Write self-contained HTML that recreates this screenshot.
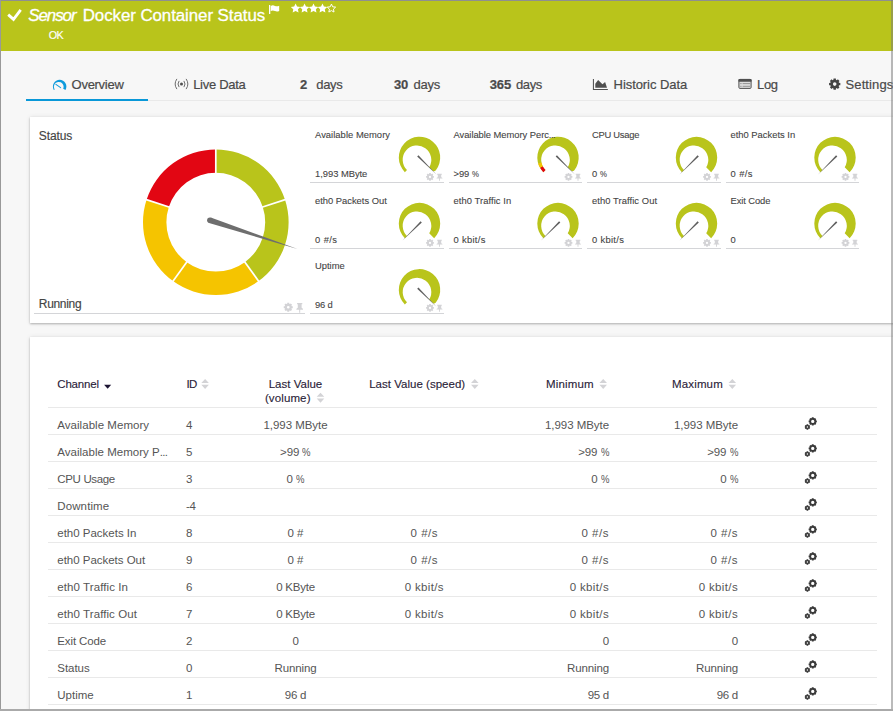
<!DOCTYPE html>
<html lang="en"><head><meta charset="utf-8"><title>Sensor Docker Container Status</title>
<style>
html,body{margin:0;padding:0}
body{width:893px;height:711px;overflow:hidden;position:relative;background:#f7f7f7;font-family:"Liberation Sans", sans-serif;}
.t{position:absolute;white-space:nowrap;margin:0;padding:0}
.abs{position:absolute}
.el{letter-spacing:-.055em}
.pc{display:inline-block;width:.74em;transform:scaleX(.83);transform-origin:0 50%;letter-spacing:0}
.card{position:absolute;background:#fff;box-shadow:0 1px 2px rgba(0,0,0,.26),0 0 5px rgba(0,0,0,.09)}
.hl{position:absolute;height:1px;background:#d4d5d8}
.rl{position:absolute;height:1px;background:#e9e9e9;left:48px;width:829px}
</style></head><body>
<div class="abs" style="left:0;top:0;width:893px;height:51px;background:#b9c41b"></div>
<div class="abs" style="left:26px;top:100px;width:870px;height:1px;background:#e9e9e9"></div>
<div class="abs" style="left:26px;top:99px;width:122px;height:2px;background:#0998d8"></div>
<div class="card" style="left:30px;top:117px;width:880px;height:206px"></div>
<div class="card" style="left:30px;top:337px;width:880px;height:400px"></div>
<div class="hl" style="left:34px;top:313px;width:271px"></div>
<div class="hl" style="left:310.0px;top:182px;width:133.5px"></div><div class="hl" style="left:448.5px;top:182px;width:133.5px"></div><div class="hl" style="left:587.0px;top:182px;width:133.5px"></div><div class="hl" style="left:725.5px;top:182px;width:133.5px"></div><div class="hl" style="left:310.0px;top:248px;width:133.5px"></div><div class="hl" style="left:448.5px;top:248px;width:133.5px"></div><div class="hl" style="left:587.0px;top:248px;width:133.5px"></div><div class="hl" style="left:725.5px;top:248px;width:133.5px"></div><div class="hl" style="left:310.0px;top:313px;width:133.5px"></div>
<div class="rl" style="top:407px"></div><div class="rl" style="top:434px"></div><div class="rl" style="top:461px"></div><div class="rl" style="top:488px"></div><div class="rl" style="top:515px"></div><div class="rl" style="top:542px"></div><div class="rl" style="top:569px"></div><div class="rl" style="top:596px"></div><div class="rl" style="top:623px"></div><div class="rl" style="top:650px"></div><div class="rl" style="top:677px"></div><div class="rl" style="top:704px"></div>
<svg class="abs" style="left:0;top:0" width="893" height="711" viewBox="0 0 893 711">
<path fill="none" stroke="#fff" stroke-width="2.8" d="M8.2 14.6L13.5 19.4L20.7 9.9"/>
<path fill="#fff" d="M269 5h1.3v9h-1.3zM270.8 5.9c1.6-.9 2.8-.6 4.2 0s2.6 .6 4.2-.2v5.2c-1.6 .8-2.8 .8-4.2 .2s-2.6-.9-4.2 0z"/>
<polygon fill="#fff" points="295.60,3.50 297.04,6.52 300.36,6.95 297.93,9.26 298.54,12.55 295.60,10.95 292.66,12.55 293.27,9.26 290.84,6.95 294.16,6.52"/>
<polygon fill="#fff" points="304.56,3.50 306.00,6.52 309.32,6.95 306.89,9.26 307.50,12.55 304.56,10.95 301.62,12.55 302.23,9.26 299.80,6.95 303.12,6.52"/>
<polygon fill="#fff" points="313.52,3.50 314.96,6.52 318.28,6.95 315.85,9.26 316.46,12.55 313.52,10.95 310.58,12.55 311.19,9.26 308.76,6.95 312.08,6.52"/>
<polygon fill="#fff" points="322.48,3.50 323.92,6.52 327.24,6.95 324.81,9.26 325.42,12.55 322.48,10.95 319.54,12.55 320.15,9.26 317.72,6.95 321.04,6.52"/>
<polygon fill="none" stroke="#fff" stroke-width="1" points="331.44,4.10 332.67,6.80 335.62,7.14 333.44,9.15 334.03,12.06 331.44,10.60 328.85,12.06 329.44,9.15 327.26,7.14 330.21,6.80"/>
<path fill="#0f9bdc" d="M53.80 89.97A6.75 6.75 0 1 1 65.50 89.97L63.21 88.66A4.85 4.85 0 1 0 54.72 89.45Z"/>
<path stroke="#0f9bdc" stroke-width="1.05" stroke-linecap="round" d="M55.9 84.4L60.6 87.6"/>
<circle cx="181.5" cy="84" r="1.5" fill="#505050"/>
<g fill="none" stroke="#5c5c5c" stroke-width=".9"><path d="M179.1 80.9Q176.9 84 179.1 87.1"/><path d="M183.9 80.9Q186.1 84 183.9 87.1"/><path d="M176.9 78.9Q173.4 84 176.9 89.1"/><path d="M186.1 78.9Q189.6 84 186.1 89.1"/></g>
<path fill="#505050" d="M592.9 79h1.05v10h13.9v1h-14.95z"/>
<path fill="#505050" d="M595.3 87.8v-4l2.8 -3.8 4.4 4.3 2.6 -2.3 1.9 5.8z"/>
<rect x="738.9" y="79.4" width="12.2" height="9" rx="1" fill="#ddd" stroke="#505050" stroke-width="1"/>
<rect x="738.4" y="78.9" width="13.2" height="2.9" rx="0.8" fill="#505050"/>
<path stroke="#8a8a8a" stroke-width="0.9" d="M740.2 83.6h1.4M742.6 83.6h7.4M740.2 86.3h1.4M742.6 86.3h7.4"/>
<path fill-rule="evenodd" fill="#444" d="M833.53 78.47L835.87 78.47L835.96 79.78L836.87 80.16L837.86 79.29L839.51 80.94L838.64 81.93L839.02 82.84L840.33 82.93L840.33 85.27L839.02 85.36L838.64 86.27L839.51 87.26L837.86 88.91L836.87 88.04L835.96 88.42L835.87 89.73L833.53 89.73L833.44 88.42L832.53 88.04L831.54 88.91L829.89 87.26L830.76 86.27L830.38 85.36L829.07 85.27L829.07 82.93L830.38 82.84L830.76 81.93L829.89 80.94L831.54 79.29L832.53 80.16L833.44 79.78ZM832.90 84.10a1.8 1.8 0 1 0 3.6 0a1.8 1.8 0 1 0 -3.6 0Z"/>
<path fill="#b9c41b" d="M215.80 149.40A72.8 72.8 0 0 1 285.04 199.70L262.78 206.93A49.4 49.4 0 0 0 215.80 172.80Z"/>
<path fill="#b9c41b" d="M285.04 199.70A72.8 72.8 0 0 1 258.59 281.10L244.84 262.17A49.4 49.4 0 0 0 262.78 206.93Z"/>
<path fill="#f5c400" d="M258.59 281.10A72.8 72.8 0 0 1 173.01 281.10L186.76 262.17A49.4 49.4 0 0 0 244.84 262.17Z"/>
<path fill="#f5c400" d="M173.01 281.10A72.8 72.8 0 0 1 146.56 199.70L168.82 206.93A49.4 49.4 0 0 0 186.76 262.17Z"/>
<path fill="#e20613" d="M146.56 199.70A72.8 72.8 0 0 1 215.80 149.40L215.80 172.80A49.4 49.4 0 0 0 168.82 206.93Z"/>
<path stroke="#fff" stroke-width="1.7" d="M215.80 148.40L215.80 173.80"/>
<path stroke="#fff" stroke-width="1.7" d="M285.99 199.39L261.83 207.24"/>
<path stroke="#fff" stroke-width="1.7" d="M259.18 281.91L244.25 261.36"/>
<path stroke="#fff" stroke-width="1.7" d="M172.42 281.91L187.35 261.36"/>
<path stroke="#fff" stroke-width="1.7" d="M145.61 199.39L169.77 207.24"/>
<path fill="#6e6e6e" d="M209.04 222.92L297.50 249.06L210.78 217.60Z"/>
<circle cx="209.91" cy="220.26" r="2.80" fill="#6e6e6e"/>
<g fill="#d3d3d6"><path fill-rule="evenodd" d="M287.28 302.75L289.22 302.75L289.25 303.79L289.98 304.10L290.75 303.39L292.11 304.75L291.40 305.52L291.71 306.25L292.75 306.28L292.75 308.22L291.71 308.25L291.40 308.98L292.11 309.75L290.75 311.11L289.98 310.40L289.25 310.71L289.22 311.75L287.28 311.75L287.25 310.71L286.52 310.40L285.75 311.11L284.39 309.75L285.10 308.98L284.79 308.25L283.75 308.22L283.75 306.28L284.79 306.25L285.10 305.52L284.39 304.75L285.75 303.39L286.52 304.10L287.25 303.79ZM286.90 307.25a1.35 1.35 0 1 0 2.7 0a1.35 1.35 0 1 0 -2.7 0Z"/><path d="M297.10 303.00h5.20v1.30h-0.70v3.35q1.50 0.60 1.50 2.05h-2.90v3.05h-1.00v-3.05h-2.90q0 -1.45 1.50 -2.05v-3.35h-0.70z"/></g>
<path fill="#b9c41b" d="M404.86 172.14A20.7 20.7 0 1 1 435.86 170.19Q434.14 172.14 432.30 170.30L429.22 167.22A14.3 14.3 0 1 0 406.99 170.01Z"/>
<path fill="#5e5e5e" d="M417.17 156.44L436.47 174.47L418.44 155.17Z"/>
<g fill="#d3d3d6"><path fill-rule="evenodd" d="M429.17 173.04L430.83 173.04L430.86 173.92L431.49 174.18L432.14 173.58L433.32 174.76L432.72 175.41L432.98 176.04L433.86 176.07L433.86 177.73L432.98 177.76L432.72 178.39L433.32 179.04L432.14 180.22L431.49 179.62L430.86 179.88L430.83 180.76L429.17 180.76L429.14 179.88L428.51 179.62L427.86 180.22L426.68 179.04L427.28 178.39L427.02 177.76L426.14 177.73L426.14 176.07L427.02 176.04L427.28 175.41L426.68 174.76L427.86 173.58L428.51 174.18L429.14 173.92ZM428.85 176.90a1.15 1.15 0 1 0 2.3 0a1.15 1.15 0 1 0 -2.3 0Z"/><path d="M437.16 173.85h4.68v0.92h-0.63v2.38q1.35 0.43 1.35 1.46h-2.61v2.17h-0.90v-2.17h-2.61q0 -1.03 1.35 -1.46v-2.38h-0.63z"/></g>
<path fill="#b9c41b" d="M543.36 172.14A20.7 20.7 0 1 1 574.36 170.19Q572.64 172.14 570.80 170.30L567.72 167.22A14.3 14.3 0 1 0 545.49 170.01Z"/>
<path fill="#e20613" d="M543.36 172.14A20.7 20.7 0 0 1 540.07 167.85L542.76 166.30A14.3 14.3 0 0 0 545.49 170.01Z"/>
<path fill="#f5c400" d="M540.07 167.85A20.7 20.7 0 0 1 538.15 163.38L541.44 162.41A14.3 14.3 0 0 0 542.76 166.30Z"/>
<path fill="#5e5e5e" d="M555.67 156.44L574.97 174.47L556.94 155.17Z"/>
<g fill="#d3d3d6"><path fill-rule="evenodd" d="M567.67 173.04L569.33 173.04L569.36 173.92L569.99 174.18L570.64 173.58L571.82 174.76L571.22 175.41L571.48 176.04L572.36 176.07L572.36 177.73L571.48 177.76L571.22 178.39L571.82 179.04L570.64 180.22L569.99 179.62L569.36 179.88L569.33 180.76L567.67 180.76L567.64 179.88L567.01 179.62L566.36 180.22L565.18 179.04L565.78 178.39L565.52 177.76L564.64 177.73L564.64 176.07L565.52 176.04L565.78 175.41L565.18 174.76L566.36 173.58L567.01 174.18L567.64 173.92ZM567.35 176.90a1.15 1.15 0 1 0 2.3 0a1.15 1.15 0 1 0 -2.3 0Z"/><path d="M575.66 173.85h4.68v0.92h-0.63v2.38q1.35 0.43 1.35 1.46h-2.61v2.17h-0.90v-2.17h-2.61q0 -1.03 1.35 -1.46v-2.38h-0.63z"/></g>
<path fill="#b9c41b" d="M681.86 172.14A20.7 20.7 0 1 1 711.14 172.14L706.22 167.22A14.3 14.3 0 1 0 683.99 170.01Z"/>
<path fill="#5e5e5e" d="M697.56 155.17L679.53 174.47L698.83 156.44Z"/>
<g fill="#d3d3d6"><path fill-rule="evenodd" d="M706.17 173.04L707.83 173.04L707.86 173.92L708.49 174.18L709.14 173.58L710.32 174.76L709.72 175.41L709.98 176.04L710.86 176.07L710.86 177.73L709.98 177.76L709.72 178.39L710.32 179.04L709.14 180.22L708.49 179.62L707.86 179.88L707.83 180.76L706.17 180.76L706.14 179.88L705.51 179.62L704.86 180.22L703.68 179.04L704.28 178.39L704.02 177.76L703.14 177.73L703.14 176.07L704.02 176.04L704.28 175.41L703.68 174.76L704.86 173.58L705.51 174.18L706.14 173.92ZM705.85 176.90a1.15 1.15 0 1 0 2.3 0a1.15 1.15 0 1 0 -2.3 0Z"/><path d="M714.16 173.85h4.68v0.92h-0.63v2.38q1.35 0.43 1.35 1.46h-2.61v2.17h-0.90v-2.17h-2.61q0 -1.03 1.35 -1.46v-2.38h-0.63z"/></g>
<path fill="#b9c41b" d="M820.36 172.14A20.7 20.7 0 1 1 849.64 172.14L844.72 167.22A14.3 14.3 0 1 0 822.49 170.01Z"/>
<path fill="#5e5e5e" d="M836.06 155.17L818.03 174.47L837.33 156.44Z"/>
<g fill="#d3d3d6"><path fill-rule="evenodd" d="M844.67 173.04L846.33 173.04L846.36 173.92L846.99 174.18L847.64 173.58L848.82 174.76L848.22 175.41L848.48 176.04L849.36 176.07L849.36 177.73L848.48 177.76L848.22 178.39L848.82 179.04L847.64 180.22L846.99 179.62L846.36 179.88L846.33 180.76L844.67 180.76L844.64 179.88L844.01 179.62L843.36 180.22L842.18 179.04L842.78 178.39L842.52 177.76L841.64 177.73L841.64 176.07L842.52 176.04L842.78 175.41L842.18 174.76L843.36 173.58L844.01 174.18L844.64 173.92ZM844.35 176.90a1.15 1.15 0 1 0 2.3 0a1.15 1.15 0 1 0 -2.3 0Z"/><path d="M852.66 173.85h4.68v0.92h-0.63v2.38q1.35 0.43 1.35 1.46h-2.61v2.17h-0.90v-2.17h-2.61q0 -1.03 1.35 -1.46v-2.38h-0.63z"/></g>
<path fill="#b9c41b" d="M404.86 238.14A20.7 20.7 0 1 1 434.14 238.14L429.22 233.22A14.3 14.3 0 1 0 406.99 236.01Z"/>
<path fill="#5e5e5e" d="M420.56 221.17L402.53 240.47L421.83 222.44Z"/>
<g fill="#d3d3d6"><path fill-rule="evenodd" d="M429.17 239.04L430.83 239.04L430.86 239.92L431.49 240.18L432.14 239.58L433.32 240.76L432.72 241.41L432.98 242.04L433.86 242.07L433.86 243.73L432.98 243.76L432.72 244.39L433.32 245.04L432.14 246.22L431.49 245.62L430.86 245.88L430.83 246.76L429.17 246.76L429.14 245.88L428.51 245.62L427.86 246.22L426.68 245.04L427.28 244.39L427.02 243.76L426.14 243.73L426.14 242.07L427.02 242.04L427.28 241.41L426.68 240.76L427.86 239.58L428.51 240.18L429.14 239.92ZM428.85 242.90a1.15 1.15 0 1 0 2.3 0a1.15 1.15 0 1 0 -2.3 0Z"/><path d="M437.16 239.85h4.68v0.92h-0.63v2.38q1.35 0.43 1.35 1.46h-2.61v2.17h-0.90v-2.17h-2.61q0 -1.03 1.35 -1.46v-2.38h-0.63z"/></g>
<path fill="#b9c41b" d="M543.36 238.14A20.7 20.7 0 1 1 572.64 238.14L567.72 233.22A14.3 14.3 0 1 0 545.49 236.01Z"/>
<path fill="#5e5e5e" d="M559.06 221.17L541.03 240.47L560.33 222.44Z"/>
<g fill="#d3d3d6"><path fill-rule="evenodd" d="M567.67 239.04L569.33 239.04L569.36 239.92L569.99 240.18L570.64 239.58L571.82 240.76L571.22 241.41L571.48 242.04L572.36 242.07L572.36 243.73L571.48 243.76L571.22 244.39L571.82 245.04L570.64 246.22L569.99 245.62L569.36 245.88L569.33 246.76L567.67 246.76L567.64 245.88L567.01 245.62L566.36 246.22L565.18 245.04L565.78 244.39L565.52 243.76L564.64 243.73L564.64 242.07L565.52 242.04L565.78 241.41L565.18 240.76L566.36 239.58L567.01 240.18L567.64 239.92ZM567.35 242.90a1.15 1.15 0 1 0 2.3 0a1.15 1.15 0 1 0 -2.3 0Z"/><path d="M575.66 239.85h4.68v0.92h-0.63v2.38q1.35 0.43 1.35 1.46h-2.61v2.17h-0.90v-2.17h-2.61q0 -1.03 1.35 -1.46v-2.38h-0.63z"/></g>
<path fill="#b9c41b" d="M681.86 238.14A20.7 20.7 0 1 1 711.14 238.14L706.22 233.22A14.3 14.3 0 1 0 683.99 236.01Z"/>
<path fill="#5e5e5e" d="M697.56 221.17L679.53 240.47L698.83 222.44Z"/>
<g fill="#d3d3d6"><path fill-rule="evenodd" d="M706.17 239.04L707.83 239.04L707.86 239.92L708.49 240.18L709.14 239.58L710.32 240.76L709.72 241.41L709.98 242.04L710.86 242.07L710.86 243.73L709.98 243.76L709.72 244.39L710.32 245.04L709.14 246.22L708.49 245.62L707.86 245.88L707.83 246.76L706.17 246.76L706.14 245.88L705.51 245.62L704.86 246.22L703.68 245.04L704.28 244.39L704.02 243.76L703.14 243.73L703.14 242.07L704.02 242.04L704.28 241.41L703.68 240.76L704.86 239.58L705.51 240.18L706.14 239.92ZM705.85 242.90a1.15 1.15 0 1 0 2.3 0a1.15 1.15 0 1 0 -2.3 0Z"/><path d="M714.16 239.85h4.68v0.92h-0.63v2.38q1.35 0.43 1.35 1.46h-2.61v2.17h-0.90v-2.17h-2.61q0 -1.03 1.35 -1.46v-2.38h-0.63z"/></g>
<path fill="#b9c41b" d="M820.36 238.14A20.7 20.7 0 1 1 849.64 238.14L844.72 233.22A14.3 14.3 0 1 0 822.49 236.01Z"/>
<path fill="#5e5e5e" d="M836.06 221.17L818.03 240.47L837.33 222.44Z"/>
<g fill="#d3d3d6"><path fill-rule="evenodd" d="M844.67 239.04L846.33 239.04L846.36 239.92L846.99 240.18L847.64 239.58L848.82 240.76L848.22 241.41L848.48 242.04L849.36 242.07L849.36 243.73L848.48 243.76L848.22 244.39L848.82 245.04L847.64 246.22L846.99 245.62L846.36 245.88L846.33 246.76L844.67 246.76L844.64 245.88L844.01 245.62L843.36 246.22L842.18 245.04L842.78 244.39L842.52 243.76L841.64 243.73L841.64 242.07L842.52 242.04L842.78 241.41L842.18 240.76L843.36 239.58L844.01 240.18L844.64 239.92ZM844.35 242.90a1.15 1.15 0 1 0 2.3 0a1.15 1.15 0 1 0 -2.3 0Z"/><path d="M852.66 239.85h4.68v0.92h-0.63v2.38q1.35 0.43 1.35 1.46h-2.61v2.17h-0.90v-2.17h-2.61q0 -1.03 1.35 -1.46v-2.38h-0.63z"/></g>
<path fill="#b9c41b" d="M404.86 304.44A20.7 20.7 0 1 1 435.86 302.49Q434.14 304.44 432.30 302.60L429.22 299.52A14.3 14.3 0 1 0 406.99 302.31Z"/>
<path fill="#5e5e5e" d="M417.17 288.74L436.47 306.77L418.44 287.47Z"/>
<g fill="#d3d3d6"><path fill-rule="evenodd" d="M429.17 304.04L430.83 304.04L430.86 304.92L431.49 305.18L432.14 304.58L433.32 305.76L432.72 306.41L432.98 307.04L433.86 307.07L433.86 308.73L432.98 308.76L432.72 309.39L433.32 310.04L432.14 311.22L431.49 310.62L430.86 310.88L430.83 311.76L429.17 311.76L429.14 310.88L428.51 310.62L427.86 311.22L426.68 310.04L427.28 309.39L427.02 308.76L426.14 308.73L426.14 307.07L427.02 307.04L427.28 306.41L426.68 305.76L427.86 304.58L428.51 305.18L429.14 304.92ZM428.85 307.90a1.15 1.15 0 1 0 2.3 0a1.15 1.15 0 1 0 -2.3 0Z"/><path d="M437.16 304.85h4.68v0.92h-0.63v2.38q1.35 0.43 1.35 1.46h-2.61v2.17h-0.90v-2.17h-2.61q0 -1.03 1.35 -1.46v-2.38h-0.63z"/></g>
<path fill="#1c1433" d="M104.1 384.8h7.1l-3.55 3.9z"/>
<path fill="#d3d3d6" d="M201.30 383h7.6l-3.8 -4.1zM201.30 384.8h7.6l-3.8 4.1z"/>
<path fill="#d3d3d6" d="M316.70 396.80h7.6l-3.8 -4.1zM316.70 398.60h7.6l-3.8 4.1z"/>
<path fill="#d3d3d6" d="M471.00 383h7.6l-3.8 -4.1zM471.00 384.8h7.6l-3.8 4.1z"/>
<path fill="#d3d3d6" d="M599.40 383h7.6l-3.8 -4.1zM599.40 384.8h7.6l-3.8 4.1z"/>
<path fill="#d3d3d6" d="M728.50 383h7.6l-3.8 -4.1zM728.50 384.8h7.6l-3.8 4.1z"/>
<g fill="#3a3a3a"><path fill-rule="evenodd" d="M811.87 417.34L813.63 417.34L813.78 418.10L814.39 418.36L815.03 417.92L816.28 419.17L815.84 419.81L816.10 420.42L816.86 420.57L816.86 422.33L816.10 422.48L815.84 423.09L816.28 423.73L815.03 424.98L814.39 424.54L813.78 424.80L813.63 425.56L811.87 425.56L811.72 424.80L811.11 424.54L810.47 424.98L809.22 423.73L809.66 423.09L809.40 422.48L808.64 422.33L808.64 420.57L809.40 420.42L809.66 419.81L809.22 419.17L810.47 417.92L811.11 418.36L811.72 418.10ZM811.10 421.45a1.65 1.65 0 1 0 3.3 0a1.65 1.65 0 1 0 -3.3 0Z"/>
<path fill-rule="evenodd" d="M806.60 424.26L808.20 424.26L808.29 424.88L808.79 425.17L809.37 424.94L810.17 426.32L809.68 426.71L809.68 427.29L810.17 427.68L809.37 429.06L808.79 428.83L808.29 429.12L808.20 429.74L806.60 429.74L806.51 429.12L806.01 428.83L805.43 429.06L804.63 427.68L805.12 427.29L805.12 426.71L804.63 426.32L805.43 424.94L806.01 425.17L806.51 424.88ZM806.65 427.00a0.75 0.75 0 1 0 1.5 0a0.75 0.75 0 1 0 -1.5 0Z"/>
<path fill-rule="evenodd" d="M811.87 444.34L813.63 444.34L813.78 445.10L814.39 445.36L815.03 444.92L816.28 446.17L815.84 446.81L816.10 447.42L816.86 447.57L816.86 449.33L816.10 449.48L815.84 450.09L816.28 450.73L815.03 451.98L814.39 451.54L813.78 451.80L813.63 452.56L811.87 452.56L811.72 451.80L811.11 451.54L810.47 451.98L809.22 450.73L809.66 450.09L809.40 449.48L808.64 449.33L808.64 447.57L809.40 447.42L809.66 446.81L809.22 446.17L810.47 444.92L811.11 445.36L811.72 445.10ZM811.10 448.45a1.65 1.65 0 1 0 3.3 0a1.65 1.65 0 1 0 -3.3 0Z"/>
<path fill-rule="evenodd" d="M806.60 451.26L808.20 451.26L808.29 451.88L808.79 452.17L809.37 451.94L810.17 453.32L809.68 453.71L809.68 454.29L810.17 454.68L809.37 456.06L808.79 455.83L808.29 456.12L808.20 456.74L806.60 456.74L806.51 456.12L806.01 455.83L805.43 456.06L804.63 454.68L805.12 454.29L805.12 453.71L804.63 453.32L805.43 451.94L806.01 452.17L806.51 451.88ZM806.65 454.00a0.75 0.75 0 1 0 1.5 0a0.75 0.75 0 1 0 -1.5 0Z"/>
<path fill-rule="evenodd" d="M811.87 471.34L813.63 471.34L813.78 472.10L814.39 472.36L815.03 471.92L816.28 473.17L815.84 473.81L816.10 474.42L816.86 474.57L816.86 476.33L816.10 476.48L815.84 477.09L816.28 477.73L815.03 478.98L814.39 478.54L813.78 478.80L813.63 479.56L811.87 479.56L811.72 478.80L811.11 478.54L810.47 478.98L809.22 477.73L809.66 477.09L809.40 476.48L808.64 476.33L808.64 474.57L809.40 474.42L809.66 473.81L809.22 473.17L810.47 471.92L811.11 472.36L811.72 472.10ZM811.10 475.45a1.65 1.65 0 1 0 3.3 0a1.65 1.65 0 1 0 -3.3 0Z"/>
<path fill-rule="evenodd" d="M806.60 478.26L808.20 478.26L808.29 478.88L808.79 479.17L809.37 478.94L810.17 480.32L809.68 480.71L809.68 481.29L810.17 481.68L809.37 483.06L808.79 482.83L808.29 483.12L808.20 483.74L806.60 483.74L806.51 483.12L806.01 482.83L805.43 483.06L804.63 481.68L805.12 481.29L805.12 480.71L804.63 480.32L805.43 478.94L806.01 479.17L806.51 478.88ZM806.65 481.00a0.75 0.75 0 1 0 1.5 0a0.75 0.75 0 1 0 -1.5 0Z"/>
<path fill-rule="evenodd" d="M811.87 498.34L813.63 498.34L813.78 499.10L814.39 499.36L815.03 498.92L816.28 500.17L815.84 500.81L816.10 501.42L816.86 501.57L816.86 503.33L816.10 503.48L815.84 504.09L816.28 504.73L815.03 505.98L814.39 505.54L813.78 505.80L813.63 506.56L811.87 506.56L811.72 505.80L811.11 505.54L810.47 505.98L809.22 504.73L809.66 504.09L809.40 503.48L808.64 503.33L808.64 501.57L809.40 501.42L809.66 500.81L809.22 500.17L810.47 498.92L811.11 499.36L811.72 499.10ZM811.10 502.45a1.65 1.65 0 1 0 3.3 0a1.65 1.65 0 1 0 -3.3 0Z"/>
<path fill-rule="evenodd" d="M806.60 505.26L808.20 505.26L808.29 505.88L808.79 506.17L809.37 505.94L810.17 507.32L809.68 507.71L809.68 508.29L810.17 508.68L809.37 510.06L808.79 509.83L808.29 510.12L808.20 510.74L806.60 510.74L806.51 510.12L806.01 509.83L805.43 510.06L804.63 508.68L805.12 508.29L805.12 507.71L804.63 507.32L805.43 505.94L806.01 506.17L806.51 505.88ZM806.65 508.00a0.75 0.75 0 1 0 1.5 0a0.75 0.75 0 1 0 -1.5 0Z"/>
<path fill-rule="evenodd" d="M811.87 525.34L813.63 525.34L813.78 526.10L814.39 526.36L815.03 525.92L816.28 527.17L815.84 527.81L816.10 528.42L816.86 528.57L816.86 530.33L816.10 530.48L815.84 531.09L816.28 531.73L815.03 532.98L814.39 532.54L813.78 532.80L813.63 533.56L811.87 533.56L811.72 532.80L811.11 532.54L810.47 532.98L809.22 531.73L809.66 531.09L809.40 530.48L808.64 530.33L808.64 528.57L809.40 528.42L809.66 527.81L809.22 527.17L810.47 525.92L811.11 526.36L811.72 526.10ZM811.10 529.45a1.65 1.65 0 1 0 3.3 0a1.65 1.65 0 1 0 -3.3 0Z"/>
<path fill-rule="evenodd" d="M806.60 532.26L808.20 532.26L808.29 532.88L808.79 533.17L809.37 532.94L810.17 534.32L809.68 534.71L809.68 535.29L810.17 535.68L809.37 537.06L808.79 536.83L808.29 537.12L808.20 537.74L806.60 537.74L806.51 537.12L806.01 536.83L805.43 537.06L804.63 535.68L805.12 535.29L805.12 534.71L804.63 534.32L805.43 532.94L806.01 533.17L806.51 532.88ZM806.65 535.00a0.75 0.75 0 1 0 1.5 0a0.75 0.75 0 1 0 -1.5 0Z"/>
<path fill-rule="evenodd" d="M811.87 552.34L813.63 552.34L813.78 553.10L814.39 553.36L815.03 552.92L816.28 554.17L815.84 554.81L816.10 555.42L816.86 555.57L816.86 557.33L816.10 557.48L815.84 558.09L816.28 558.73L815.03 559.98L814.39 559.54L813.78 559.80L813.63 560.56L811.87 560.56L811.72 559.80L811.11 559.54L810.47 559.98L809.22 558.73L809.66 558.09L809.40 557.48L808.64 557.33L808.64 555.57L809.40 555.42L809.66 554.81L809.22 554.17L810.47 552.92L811.11 553.36L811.72 553.10ZM811.10 556.45a1.65 1.65 0 1 0 3.3 0a1.65 1.65 0 1 0 -3.3 0Z"/>
<path fill-rule="evenodd" d="M806.60 559.26L808.20 559.26L808.29 559.88L808.79 560.17L809.37 559.94L810.17 561.32L809.68 561.71L809.68 562.29L810.17 562.68L809.37 564.06L808.79 563.83L808.29 564.12L808.20 564.74L806.60 564.74L806.51 564.12L806.01 563.83L805.43 564.06L804.63 562.68L805.12 562.29L805.12 561.71L804.63 561.32L805.43 559.94L806.01 560.17L806.51 559.88ZM806.65 562.00a0.75 0.75 0 1 0 1.5 0a0.75 0.75 0 1 0 -1.5 0Z"/>
<path fill-rule="evenodd" d="M811.87 579.34L813.63 579.34L813.78 580.10L814.39 580.36L815.03 579.92L816.28 581.17L815.84 581.81L816.10 582.42L816.86 582.57L816.86 584.33L816.10 584.48L815.84 585.09L816.28 585.73L815.03 586.98L814.39 586.54L813.78 586.80L813.63 587.56L811.87 587.56L811.72 586.80L811.11 586.54L810.47 586.98L809.22 585.73L809.66 585.09L809.40 584.48L808.64 584.33L808.64 582.57L809.40 582.42L809.66 581.81L809.22 581.17L810.47 579.92L811.11 580.36L811.72 580.10ZM811.10 583.45a1.65 1.65 0 1 0 3.3 0a1.65 1.65 0 1 0 -3.3 0Z"/>
<path fill-rule="evenodd" d="M806.60 586.26L808.20 586.26L808.29 586.88L808.79 587.17L809.37 586.94L810.17 588.32L809.68 588.71L809.68 589.29L810.17 589.68L809.37 591.06L808.79 590.83L808.29 591.12L808.20 591.74L806.60 591.74L806.51 591.12L806.01 590.83L805.43 591.06L804.63 589.68L805.12 589.29L805.12 588.71L804.63 588.32L805.43 586.94L806.01 587.17L806.51 586.88ZM806.65 589.00a0.75 0.75 0 1 0 1.5 0a0.75 0.75 0 1 0 -1.5 0Z"/>
<path fill-rule="evenodd" d="M811.87 606.34L813.63 606.34L813.78 607.10L814.39 607.36L815.03 606.92L816.28 608.17L815.84 608.81L816.10 609.42L816.86 609.57L816.86 611.33L816.10 611.48L815.84 612.09L816.28 612.73L815.03 613.98L814.39 613.54L813.78 613.80L813.63 614.56L811.87 614.56L811.72 613.80L811.11 613.54L810.47 613.98L809.22 612.73L809.66 612.09L809.40 611.48L808.64 611.33L808.64 609.57L809.40 609.42L809.66 608.81L809.22 608.17L810.47 606.92L811.11 607.36L811.72 607.10ZM811.10 610.45a1.65 1.65 0 1 0 3.3 0a1.65 1.65 0 1 0 -3.3 0Z"/>
<path fill-rule="evenodd" d="M806.60 613.26L808.20 613.26L808.29 613.88L808.79 614.17L809.37 613.94L810.17 615.32L809.68 615.71L809.68 616.29L810.17 616.68L809.37 618.06L808.79 617.83L808.29 618.12L808.20 618.74L806.60 618.74L806.51 618.12L806.01 617.83L805.43 618.06L804.63 616.68L805.12 616.29L805.12 615.71L804.63 615.32L805.43 613.94L806.01 614.17L806.51 613.88ZM806.65 616.00a0.75 0.75 0 1 0 1.5 0a0.75 0.75 0 1 0 -1.5 0Z"/>
<path fill-rule="evenodd" d="M811.87 633.34L813.63 633.34L813.78 634.10L814.39 634.36L815.03 633.92L816.28 635.17L815.84 635.81L816.10 636.42L816.86 636.57L816.86 638.33L816.10 638.48L815.84 639.09L816.28 639.73L815.03 640.98L814.39 640.54L813.78 640.80L813.63 641.56L811.87 641.56L811.72 640.80L811.11 640.54L810.47 640.98L809.22 639.73L809.66 639.09L809.40 638.48L808.64 638.33L808.64 636.57L809.40 636.42L809.66 635.81L809.22 635.17L810.47 633.92L811.11 634.36L811.72 634.10ZM811.10 637.45a1.65 1.65 0 1 0 3.3 0a1.65 1.65 0 1 0 -3.3 0Z"/>
<path fill-rule="evenodd" d="M806.60 640.26L808.20 640.26L808.29 640.88L808.79 641.17L809.37 640.94L810.17 642.32L809.68 642.71L809.68 643.29L810.17 643.68L809.37 645.06L808.79 644.83L808.29 645.12L808.20 645.74L806.60 645.74L806.51 645.12L806.01 644.83L805.43 645.06L804.63 643.68L805.12 643.29L805.12 642.71L804.63 642.32L805.43 640.94L806.01 641.17L806.51 640.88ZM806.65 643.00a0.75 0.75 0 1 0 1.5 0a0.75 0.75 0 1 0 -1.5 0Z"/>
<path fill-rule="evenodd" d="M811.87 660.34L813.63 660.34L813.78 661.10L814.39 661.36L815.03 660.92L816.28 662.17L815.84 662.81L816.10 663.42L816.86 663.57L816.86 665.33L816.10 665.48L815.84 666.09L816.28 666.73L815.03 667.98L814.39 667.54L813.78 667.80L813.63 668.56L811.87 668.56L811.72 667.80L811.11 667.54L810.47 667.98L809.22 666.73L809.66 666.09L809.40 665.48L808.64 665.33L808.64 663.57L809.40 663.42L809.66 662.81L809.22 662.17L810.47 660.92L811.11 661.36L811.72 661.10ZM811.10 664.45a1.65 1.65 0 1 0 3.3 0a1.65 1.65 0 1 0 -3.3 0Z"/>
<path fill-rule="evenodd" d="M806.60 667.26L808.20 667.26L808.29 667.88L808.79 668.17L809.37 667.94L810.17 669.32L809.68 669.71L809.68 670.29L810.17 670.68L809.37 672.06L808.79 671.83L808.29 672.12L808.20 672.74L806.60 672.74L806.51 672.12L806.01 671.83L805.43 672.06L804.63 670.68L805.12 670.29L805.12 669.71L804.63 669.32L805.43 667.94L806.01 668.17L806.51 667.88ZM806.65 670.00a0.75 0.75 0 1 0 1.5 0a0.75 0.75 0 1 0 -1.5 0Z"/>
<path fill-rule="evenodd" d="M811.87 687.34L813.63 687.34L813.78 688.10L814.39 688.36L815.03 687.92L816.28 689.17L815.84 689.81L816.10 690.42L816.86 690.57L816.86 692.33L816.10 692.48L815.84 693.09L816.28 693.73L815.03 694.98L814.39 694.54L813.78 694.80L813.63 695.56L811.87 695.56L811.72 694.80L811.11 694.54L810.47 694.98L809.22 693.73L809.66 693.09L809.40 692.48L808.64 692.33L808.64 690.57L809.40 690.42L809.66 689.81L809.22 689.17L810.47 687.92L811.11 688.36L811.72 688.10ZM811.10 691.45a1.65 1.65 0 1 0 3.3 0a1.65 1.65 0 1 0 -3.3 0Z"/>
<path fill-rule="evenodd" d="M806.60 694.26L808.20 694.26L808.29 694.88L808.79 695.17L809.37 694.94L810.17 696.32L809.68 696.71L809.68 697.29L810.17 697.68L809.37 699.06L808.79 698.83L808.29 699.12L808.20 699.74L806.60 699.74L806.51 699.12L806.01 698.83L805.43 699.06L804.63 697.68L805.12 697.29L805.12 696.71L804.63 696.32L805.43 694.94L806.01 695.17L806.51 694.88ZM806.65 697.00a0.75 0.75 0 1 0 1.5 0a0.75 0.75 0 1 0 -1.5 0Z"/></g>
</svg>
<span class="t" id="t0" style="top:3.74px;font-size:16.9px;line-height:24px;color:#fff;font-style:italic;letter-spacing:-1.022px;-webkit-text-stroke:0.3px;left:28.20px;">Sensor</span>
<span class="t" id="t1" style="top:3.74px;font-size:16.9px;line-height:24px;color:#fff;letter-spacing:-0.070px;-webkit-text-stroke:0.3px;left:82.70px;">Docker Container Status</span>
<span class="t" id="t2" style="top:27.76px;font-size:10.8px;line-height:15px;color:#fff;letter-spacing:-0.655px;-webkit-text-stroke:0.15px;left:48.80px;">OK</span>
<span class="t" id="t3" style="top:75.50px;font-size:13px;line-height:18px;color:#4a4a4a;letter-spacing:-0.286px;-webkit-text-stroke:0.2px;left:71.60px;">Overview</span>
<span class="t" id="t4" style="top:75.50px;font-size:13px;line-height:18px;color:#4a4a4a;letter-spacing:-0.302px;-webkit-text-stroke:0.2px;left:193.20px;">Live Data</span>
<span class="t" id="t5" style="top:75.50px;font-size:13px;line-height:18px;color:#4a4a4a;font-weight:bold;letter-spacing:0.166px;-webkit-text-stroke:0.2px;left:300.00px;">2</span>
<span class="t" id="t6" style="top:75.50px;font-size:13px;line-height:18px;color:#4a4a4a;letter-spacing:-0.267px;-webkit-text-stroke:0.2px;left:316.20px;">days</span>
<span class="t" id="t7" style="top:75.50px;font-size:13px;line-height:18px;color:#4a4a4a;font-weight:bold;letter-spacing:-0.084px;-webkit-text-stroke:0.2px;left:393.90px;">30</span>
<span class="t" id="t8" style="top:75.50px;font-size:13px;line-height:18px;color:#4a4a4a;letter-spacing:-0.267px;-webkit-text-stroke:0.2px;left:413.60px;">days</span>
<span class="t" id="t9" style="top:75.50px;font-size:13px;line-height:18px;color:#4a4a4a;font-weight:bold;letter-spacing:-0.134px;-webkit-text-stroke:0.2px;left:489.70px;">365</span>
<span class="t" id="t10" style="top:75.50px;font-size:13px;line-height:18px;color:#4a4a4a;letter-spacing:-0.367px;-webkit-text-stroke:0.2px;left:516.00px;">days</span>
<span class="t" id="t11" style="top:75.50px;font-size:13px;line-height:18px;color:#4a4a4a;letter-spacing:-0.071px;-webkit-text-stroke:0.2px;left:613.60px;">Historic Data</span>
<span class="t" id="t12" style="top:75.50px;font-size:13px;line-height:18px;color:#4a4a4a;letter-spacing:-0.301px;-webkit-text-stroke:0.2px;left:757.00px;">Log</span>
<span class="t" id="t13" style="top:75.50px;font-size:13px;line-height:18px;color:#4a4a4a;letter-spacing:0.114px;-webkit-text-stroke:0.2px;left:845.50px;">Settings</span>
<span class="t" id="t14" style="top:127.74px;font-size:12px;line-height:17px;color:#444;letter-spacing:-0.122px;-webkit-text-stroke:0.15px;left:38.80px;">Status</span>
<span class="t" id="t15" style="top:295.74px;font-size:12px;line-height:17px;color:#444;letter-spacing:-0.315px;-webkit-text-stroke:0.15px;left:38.80px;">Running</span>
<span class="t" id="t16" style="top:128.14px;font-size:9.4px;line-height:13px;color:#444;letter-spacing:0.043px;-webkit-text-stroke:0.1px;left:315.00px;">Available Memory</span>
<span class="t" id="t17" style="top:166.74px;font-size:9.4px;line-height:13px;color:#444;letter-spacing:-0.030px;-webkit-text-stroke:0.1px;left:315.00px;">1,993 MByte</span>
<span class="t" id="t18" style="top:128.14px;font-size:9.4px;line-height:13px;color:#444;letter-spacing:-0.041px;-webkit-text-stroke:0.1px;left:453.50px;">Available Memory Perc<span class="el">...</span></span>
<span class="t" id="t19" style="top:166.74px;font-size:9.4px;line-height:13px;color:#444;letter-spacing:-0.075px;-webkit-text-stroke:0.1px;left:453.50px;">&gt;99 <span class="pc">%</span></span>
<span class="t" id="t20" style="top:128.14px;font-size:9.4px;line-height:13px;color:#444;letter-spacing:-0.269px;-webkit-text-stroke:0.1px;left:592.00px;">CPU Usage</span>
<span class="t" id="t21" style="top:166.74px;font-size:9.4px;line-height:13px;color:#444;letter-spacing:-0.132px;-webkit-text-stroke:0.1px;left:592.00px;">0 <span class="pc">%</span></span>
<span class="t" id="t22" style="top:128.14px;font-size:9.4px;line-height:13px;color:#444;letter-spacing:0.002px;-webkit-text-stroke:0.1px;left:730.50px;">eth0 Packets In</span>
<span class="t" id="t23" style="top:166.74px;font-size:9.4px;line-height:13px;color:#444;letter-spacing:0.430px;-webkit-text-stroke:0.1px;left:730.50px;">0 #/s</span>
<span class="t" id="t24" style="top:193.94px;font-size:9.4px;line-height:13px;color:#444;letter-spacing:-0.010px;-webkit-text-stroke:0.1px;left:315.00px;">eth0 Packets Out</span>
<span class="t" id="t25" style="top:232.74px;font-size:9.4px;line-height:13px;color:#444;letter-spacing:0.430px;-webkit-text-stroke:0.1px;left:315.00px;">0 #/s</span>
<span class="t" id="t26" style="top:193.94px;font-size:9.4px;line-height:13px;color:#444;letter-spacing:0.077px;-webkit-text-stroke:0.1px;left:453.50px;">eth0 Traffic In</span>
<span class="t" id="t27" style="top:232.74px;font-size:9.4px;line-height:13px;color:#444;letter-spacing:0.303px;-webkit-text-stroke:0.1px;left:453.50px;">0 kbit/s</span>
<span class="t" id="t28" style="top:193.94px;font-size:9.4px;line-height:13px;color:#444;letter-spacing:0.077px;-webkit-text-stroke:0.1px;left:592.00px;">eth0 Traffic Out</span>
<span class="t" id="t29" style="top:232.74px;font-size:9.4px;line-height:13px;color:#444;letter-spacing:0.303px;-webkit-text-stroke:0.1px;left:592.00px;">0 kbit/s</span>
<span class="t" id="t30" style="top:193.94px;font-size:9.4px;line-height:13px;color:#444;letter-spacing:-0.085px;-webkit-text-stroke:0.1px;left:730.50px;">Exit Code</span>
<span class="t" id="t31" style="top:232.74px;font-size:9.4px;line-height:13px;color:#444;letter-spacing:-0.151px;-webkit-text-stroke:0.1px;left:730.50px;">0</span>
<span class="t" id="t32" style="top:259.14px;font-size:9.4px;line-height:13px;color:#444;letter-spacing:0.008px;-webkit-text-stroke:0.1px;left:315.00px;">Uptime</span>
<span class="t" id="t33" style="top:298.44px;font-size:9.4px;line-height:13px;color:#444;letter-spacing:-0.210px;-webkit-text-stroke:0.1px;left:315.00px;">96 d</span>
<span class="t" id="t34" style="top:376.32px;font-size:11.5px;line-height:16px;color:#2a2238;letter-spacing:-0.192px;-webkit-text-stroke:0.12px;left:57.30px;">Channel</span>
<span class="t" id="t35" style="top:376.32px;font-size:11.5px;line-height:16px;color:#2a2238;letter-spacing:-0.750px;-webkit-text-stroke:0.12px;left:186.50px;">ID</span>
<span class="t" id="t36" style="top:376.32px;font-size:11.5px;line-height:16px;color:#2a2238;letter-spacing:0.010px;-webkit-text-stroke:0.12px;left:268.70px;">Last Value</span>
<span class="t" id="t37" style="top:390.32px;font-size:11.5px;line-height:16px;color:#2a2238;letter-spacing:0.121px;-webkit-text-stroke:0.12px;left:264.90px;">(volume)</span>
<span class="t" id="t38" style="top:376.32px;font-size:11.5px;line-height:16px;color:#2a2238;letter-spacing:0.017px;-webkit-text-stroke:0.12px;left:369.20px;">Last Value (speed)</span>
<span class="t" id="t39" style="top:376.32px;font-size:11.5px;line-height:16px;color:#2a2238;letter-spacing:0.194px;-webkit-text-stroke:0.12px;left:545.90px;">Minimum</span>
<span class="t" id="t40" style="top:376.32px;font-size:11.5px;line-height:16px;color:#2a2238;letter-spacing:0.151px;-webkit-text-stroke:0.12px;left:672.00px;">Maximum</span>
<span class="t" id="t41" style="top:416.52px;font-size:11.5px;line-height:16px;color:#555;letter-spacing:0.038px;left:57.30px;">Available Memory</span>
<span class="t" id="t42" style="top:416.52px;font-size:11.5px;line-height:16px;color:#555;letter-spacing:-0.206px;left:186.10px;">4</span>
<div class="t" style="top:416.52px;font-size:11.5px;line-height:16px;color:#555;letter-spacing:-0.053px;left:95.50px;width:400px;text-align:center;"><span id="t43">1,993 MByte</span></div>
<div class="t" style="top:416.52px;font-size:11.5px;line-height:16px;color:#555;letter-spacing:-0.053px;left:209.00px;width:400px;text-align:right;"><span id="t44">1,993 MByte</span></div>
<div class="t" style="top:416.52px;font-size:11.5px;line-height:16px;color:#555;letter-spacing:-0.053px;left:338.00px;width:400px;text-align:right;"><span id="t45">1,993 MByte</span></div>
<span class="t" id="t46" style="top:443.52px;font-size:11.5px;line-height:16px;color:#555;letter-spacing:0.021px;left:57.30px;">Available Memory P<span class="el">...</span></span>
<span class="t" id="t47" style="top:443.52px;font-size:11.5px;line-height:16px;color:#555;letter-spacing:-0.206px;left:186.10px;">5</span>
<div class="t" style="top:443.52px;font-size:11.5px;line-height:16px;color:#555;letter-spacing:-0.101px;left:95.50px;width:400px;text-align:center;"><span id="t48">&gt;99 <span class="pc">%</span></span></div>
<div class="t" style="top:443.52px;font-size:11.5px;line-height:16px;color:#555;letter-spacing:-0.101px;left:209.00px;width:400px;text-align:right;"><span id="t49">&gt;99 <span class="pc">%</span></span></div>
<div class="t" style="top:443.52px;font-size:11.5px;line-height:16px;color:#555;letter-spacing:-0.101px;left:338.00px;width:400px;text-align:right;"><span id="t50">&gt;99 <span class="pc">%</span></span></div>
<span class="t" id="t51" style="top:470.52px;font-size:11.5px;line-height:16px;color:#555;letter-spacing:-0.347px;left:57.30px;">CPU Usage</span>
<span class="t" id="t52" style="top:470.52px;font-size:11.5px;line-height:16px;color:#555;letter-spacing:-0.206px;left:186.10px;">3</span>
<div class="t" style="top:470.52px;font-size:11.5px;line-height:16px;color:#555;letter-spacing:-0.165px;left:95.50px;width:400px;text-align:center;"><span id="t53">0 <span class="pc">%</span></span></div>
<div class="t" style="top:470.52px;font-size:11.5px;line-height:16px;color:#555;letter-spacing:-0.165px;left:209.00px;width:400px;text-align:right;"><span id="t54">0 <span class="pc">%</span></span></div>
<div class="t" style="top:470.52px;font-size:11.5px;line-height:16px;color:#555;letter-spacing:-0.165px;left:338.00px;width:400px;text-align:right;"><span id="t55">0 <span class="pc">%</span></span></div>
<span class="t" id="t56" style="top:497.52px;font-size:11.5px;line-height:16px;color:#555;letter-spacing:0.107px;left:57.30px;">Downtime</span>
<span class="t" id="t57" style="top:497.52px;font-size:11.5px;line-height:16px;color:#555;letter-spacing:-0.367px;left:186.10px;">-4</span>
<span class="t" id="t58" style="top:524.52px;font-size:11.5px;line-height:16px;color:#555;letter-spacing:-0.012px;left:57.30px;">eth0 Packets In</span>
<span class="t" id="t59" style="top:524.52px;font-size:11.5px;line-height:16px;color:#555;letter-spacing:-0.206px;left:186.10px;">8</span>
<div class="t" style="top:524.52px;font-size:11.5px;line-height:16px;color:#555;letter-spacing:0.033px;left:95.50px;width:400px;text-align:center;"><span id="t60">0 #</span></div>
<div class="t" style="top:524.52px;font-size:11.5px;line-height:16px;color:#555;letter-spacing:0.512px;left:224.30px;width:400px;text-align:center;"><span id="t61">0 #/s</span></div>
<div class="t" style="top:524.52px;font-size:11.5px;line-height:16px;color:#555;letter-spacing:0.512px;left:209.00px;width:400px;text-align:right;"><span id="t62">0 #/s</span></div>
<div class="t" style="top:524.52px;font-size:11.5px;line-height:16px;color:#555;letter-spacing:0.512px;left:338.00px;width:400px;text-align:right;"><span id="t63">0 #/s</span></div>
<span class="t" id="t64" style="top:551.52px;font-size:11.5px;line-height:16px;color:#555;letter-spacing:-0.026px;left:57.30px;">eth0 Packets Out</span>
<span class="t" id="t65" style="top:551.52px;font-size:11.5px;line-height:16px;color:#555;letter-spacing:-0.206px;left:186.10px;">9</span>
<div class="t" style="top:551.52px;font-size:11.5px;line-height:16px;color:#555;letter-spacing:0.033px;left:95.50px;width:400px;text-align:center;"><span id="t66">0 #</span></div>
<div class="t" style="top:551.52px;font-size:11.5px;line-height:16px;color:#555;letter-spacing:0.512px;left:224.30px;width:400px;text-align:center;"><span id="t67">0 #/s</span></div>
<div class="t" style="top:551.52px;font-size:11.5px;line-height:16px;color:#555;letter-spacing:0.512px;left:209.00px;width:400px;text-align:right;"><span id="t68">0 #/s</span></div>
<div class="t" style="top:551.52px;font-size:11.5px;line-height:16px;color:#555;letter-spacing:0.512px;left:338.00px;width:400px;text-align:right;"><span id="t69">0 #/s</span></div>
<span class="t" id="t70" style="top:578.52px;font-size:11.5px;line-height:16px;color:#555;letter-spacing:0.082px;left:57.30px;">eth0 Traffic In</span>
<span class="t" id="t71" style="top:578.52px;font-size:11.5px;line-height:16px;color:#555;letter-spacing:-0.206px;left:186.10px;">6</span>
<div class="t" style="top:578.52px;font-size:11.5px;line-height:16px;color:#555;letter-spacing:-0.240px;left:95.50px;width:400px;text-align:center;"><span id="t72">0 KByte</span></div>
<div class="t" style="top:578.52px;font-size:11.5px;line-height:16px;color:#555;letter-spacing:0.358px;left:224.30px;width:400px;text-align:center;"><span id="t73">0 kbit/s</span></div>
<div class="t" style="top:578.52px;font-size:11.5px;line-height:16px;color:#555;letter-spacing:0.358px;left:209.00px;width:400px;text-align:right;"><span id="t74">0 kbit/s</span></div>
<div class="t" style="top:578.52px;font-size:11.5px;line-height:16px;color:#555;letter-spacing:0.358px;left:338.00px;width:400px;text-align:right;"><span id="t75">0 kbit/s</span></div>
<span class="t" id="t76" style="top:605.52px;font-size:11.5px;line-height:16px;color:#555;letter-spacing:0.080px;left:57.30px;">eth0 Traffic Out</span>
<span class="t" id="t77" style="top:605.52px;font-size:11.5px;line-height:16px;color:#555;letter-spacing:-0.206px;left:186.10px;">7</span>
<div class="t" style="top:605.52px;font-size:11.5px;line-height:16px;color:#555;letter-spacing:-0.240px;left:95.50px;width:400px;text-align:center;"><span id="t78">0 KByte</span></div>
<div class="t" style="top:605.52px;font-size:11.5px;line-height:16px;color:#555;letter-spacing:0.358px;left:224.30px;width:400px;text-align:center;"><span id="t79">0 kbit/s</span></div>
<div class="t" style="top:605.52px;font-size:11.5px;line-height:16px;color:#555;letter-spacing:0.358px;left:209.00px;width:400px;text-align:right;"><span id="t80">0 kbit/s</span></div>
<div class="t" style="top:605.52px;font-size:11.5px;line-height:16px;color:#555;letter-spacing:0.358px;left:338.00px;width:400px;text-align:right;"><span id="t81">0 kbit/s</span></div>
<span class="t" id="t82" style="top:632.52px;font-size:11.5px;line-height:16px;color:#555;letter-spacing:-0.118px;left:57.30px;">Exit Code</span>
<span class="t" id="t83" style="top:632.52px;font-size:11.5px;line-height:16px;color:#555;letter-spacing:-0.206px;left:186.10px;">2</span>
<div class="t" style="top:632.52px;font-size:11.5px;line-height:16px;color:#555;letter-spacing:-0.206px;left:95.50px;width:400px;text-align:center;"><span id="t84">0</span></div>
<div class="t" style="top:632.52px;font-size:11.5px;line-height:16px;color:#555;letter-spacing:-0.206px;left:209.00px;width:400px;text-align:right;"><span id="t85">0</span></div>
<div class="t" style="top:632.52px;font-size:11.5px;line-height:16px;color:#555;letter-spacing:-0.206px;left:338.00px;width:400px;text-align:right;"><span id="t86">0</span></div>
<span class="t" id="t87" style="top:659.52px;font-size:11.5px;line-height:16px;color:#555;letter-spacing:-0.035px;left:57.30px;">Status</span>
<span class="t" id="t88" style="top:659.52px;font-size:11.5px;line-height:16px;color:#555;letter-spacing:-0.206px;left:186.10px;">0</span>
<div class="t" style="top:659.52px;font-size:11.5px;line-height:16px;color:#555;letter-spacing:-0.121px;left:95.50px;width:400px;text-align:center;"><span id="t89">Running</span></div>
<div class="t" style="top:659.52px;font-size:11.5px;line-height:16px;color:#555;letter-spacing:-0.121px;left:209.00px;width:400px;text-align:right;"><span id="t90">Running</span></div>
<div class="t" style="top:659.52px;font-size:11.5px;line-height:16px;color:#555;letter-spacing:-0.121px;left:338.00px;width:400px;text-align:right;"><span id="t91">Running</span></div>
<span class="t" id="t92" style="top:686.52px;font-size:11.5px;line-height:16px;color:#555;letter-spacing:-0.006px;left:57.30px;">Uptime</span>
<span class="t" id="t93" style="top:686.52px;font-size:11.5px;line-height:16px;color:#555;letter-spacing:-0.206px;left:186.10px;">1</span>
<div class="t" style="top:686.52px;font-size:11.5px;line-height:16px;color:#555;letter-spacing:-0.273px;left:95.50px;width:400px;text-align:center;"><span id="t94">96 d</span></div>
<div class="t" style="top:686.52px;font-size:11.5px;line-height:16px;color:#555;letter-spacing:-0.273px;left:209.00px;width:400px;text-align:right;"><span id="t95">95 d</span></div>
<div class="t" style="top:686.52px;font-size:11.5px;line-height:16px;color:#555;letter-spacing:-0.273px;left:338.00px;width:400px;text-align:right;"><span id="t96">96 d</span></div>
<div class="abs" style="left:0;top:0;width:893px;height:1px;background:#8f8f8f"></div>
<div class="abs" style="left:0;top:0;width:1px;height:711px;background:#999"></div>
<div class="abs" style="left:891px;top:0;width:2px;height:711px;background:rgba(120,120,120,.5)"></div>
<div class="abs" style="left:0;top:709px;width:893px;height:2px;background:#aaa"></div>
</body></html>
